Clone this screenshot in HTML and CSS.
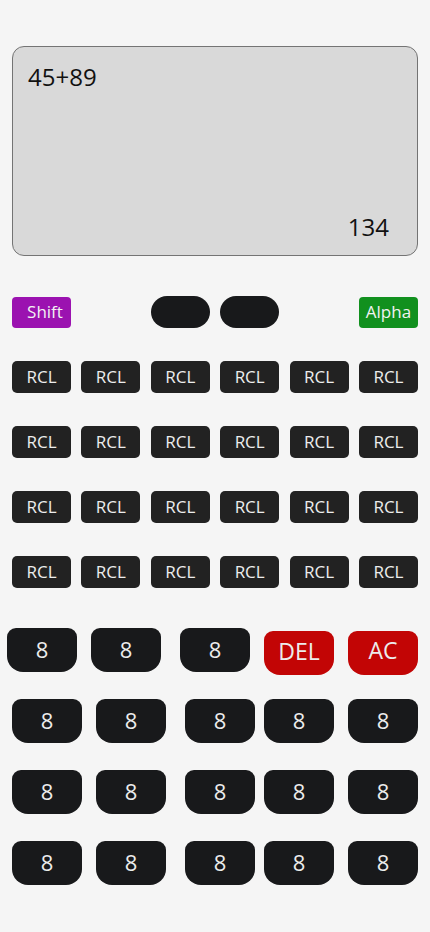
FILE: index.html
```html
<!DOCTYPE html>
<html lang="en">
<head>
<meta charset="utf-8">
<title>Calculator</title>
<link rel="stylesheet" href="styles.css">
</head>
<body>
<div class="app">
  <div class="display">
    <div class="expr">45+89</div>
    <div class="result">134</div>
  </div>

  <div class="mode-row">
    <div class="mode shift">Shift</div>
    <div class="pills">
      <div class="pill"></div>
      <div class="pill"></div>
    </div>
    <div class="mode alpha">Alpha</div>
  </div>

  <div class="fn-grid">
    <div class="fn">RCL</div><div class="fn">RCL</div><div class="fn">RCL</div><div class="fn">RCL</div><div class="fn">RCL</div><div class="fn">RCL</div>
    <div class="fn">RCL</div><div class="fn">RCL</div><div class="fn">RCL</div><div class="fn">RCL</div><div class="fn">RCL</div><div class="fn">RCL</div>
    <div class="fn">RCL</div><div class="fn">RCL</div><div class="fn">RCL</div><div class="fn">RCL</div><div class="fn">RCL</div><div class="fn">RCL</div>
    <div class="fn">RCL</div><div class="fn">RCL</div><div class="fn">RCL</div><div class="fn">RCL</div><div class="fn">RCL</div><div class="fn">RCL</div>
  </div>

  <div class="keypad">
    <div class="krow first">
      <div class="key">8</div>
      <div class="key">8</div>
      <div class="key">8</div>
      <div class="key red del">DEL</div>
      <div class="key red ac">AC</div>
    </div>
    <div class="krow">
      <div class="key">8</div>
      <div class="key">8</div>
      <div class="key">8</div>
      <div class="key">8</div>
      <div class="key">8</div>
    </div>
    <div class="krow">
      <div class="key">8</div>
      <div class="key">8</div>
      <div class="key">8</div>
      <div class="key">8</div>
      <div class="key">8</div>
    </div>
    <div class="krow">
      <div class="key">8</div>
      <div class="key">8</div>
      <div class="key">8</div>
      <div class="key">8</div>
      <div class="key">8</div>
    </div>
  </div>
</div>
</body>
</html>
```
FILE: styles.css
```css
html, body {
  margin: 0;
  padding: 0;
  background: #f5f5f5;
}

body {
  font-family: "Open Sans", "Noto Sans", sans-serif;
  width: 430px;
  height: 932px;
}

.app {
  padding: 46px 12px 0 12px;
}

.display {
  box-sizing: border-box;
  height: 210px;
  border: 1px solid #747474;
  border-radius: 12px;
  background: #d9d9d9;
  padding: 14px 28px 12px 15px;
  display: flex;
  flex-direction: column;
  justify-content: space-between;
  color: #111;
  font-size: 24px;
  line-height: 32px;
}

.result {
  text-align: right;
}

.mode-row {
  margin-top: 40px;
  display: flex;
  justify-content: space-between;
  align-items: center;
  height: 32px;
}

.mode {
  width: 59px;
  height: 31px;
  border-radius: 4px;
  color: #f2f2f2;
  font-size: 17px;
  line-height: 29px;
  text-align: center;
  box-sizing: border-box;
}

.shift {
  background: #9b12b0;
  padding-left: 7px;
}

.alpha {
  background: #11901e;
}

.pills {
  display: flex;
  gap: 10px;
}

.pill {
  width: 59px;
  height: 32px;
  border-radius: 16px;
  background: #18191b;
}

.fn-grid {
  margin-top: 33px;
  display: grid;
  grid-template-columns: repeat(6, 59px);
  justify-content: space-between;
  grid-auto-rows: 32px;
  row-gap: 33px;
}

.fn {
  background: #222222;
  border-radius: 5px;
  color: #ededed;
  font-size: 17px;
  line-height: 31px;
  text-align: center;
}

.keypad {
  margin-top: 40px;
  display: flex;
  flex-direction: column;
  gap: 27px;
}

.krow {
  display: flex;
  align-items: flex-start;
}

.key {
  width: 70px;
  height: 44px;
  flex: none;
  background: #18191b;
  border-radius: 9px 9px 16px 16px;
  color: #ececec;
  font-size: 22px;
  line-height: 43px;
  text-align: center;
}

.key:nth-child(2) { margin-left: 14px; }
.key:nth-child(3) { margin-left: 19px; }
.key:nth-child(4) { margin-left: 9px; }
.key:nth-child(5) { margin-left: 14px; }

.krow.first {
  margin-left: -5px;
  margin-bottom: -3px;
}

.key.red {
  background: #c20505;
  font-size: 23px;
  margin-top: 3px;
}

.key.del {
  line-height: 41px;
}

.key.ac {
  line-height: 38px;
}

.krow.first .key.del {
  margin-left: 14px;
}
```
